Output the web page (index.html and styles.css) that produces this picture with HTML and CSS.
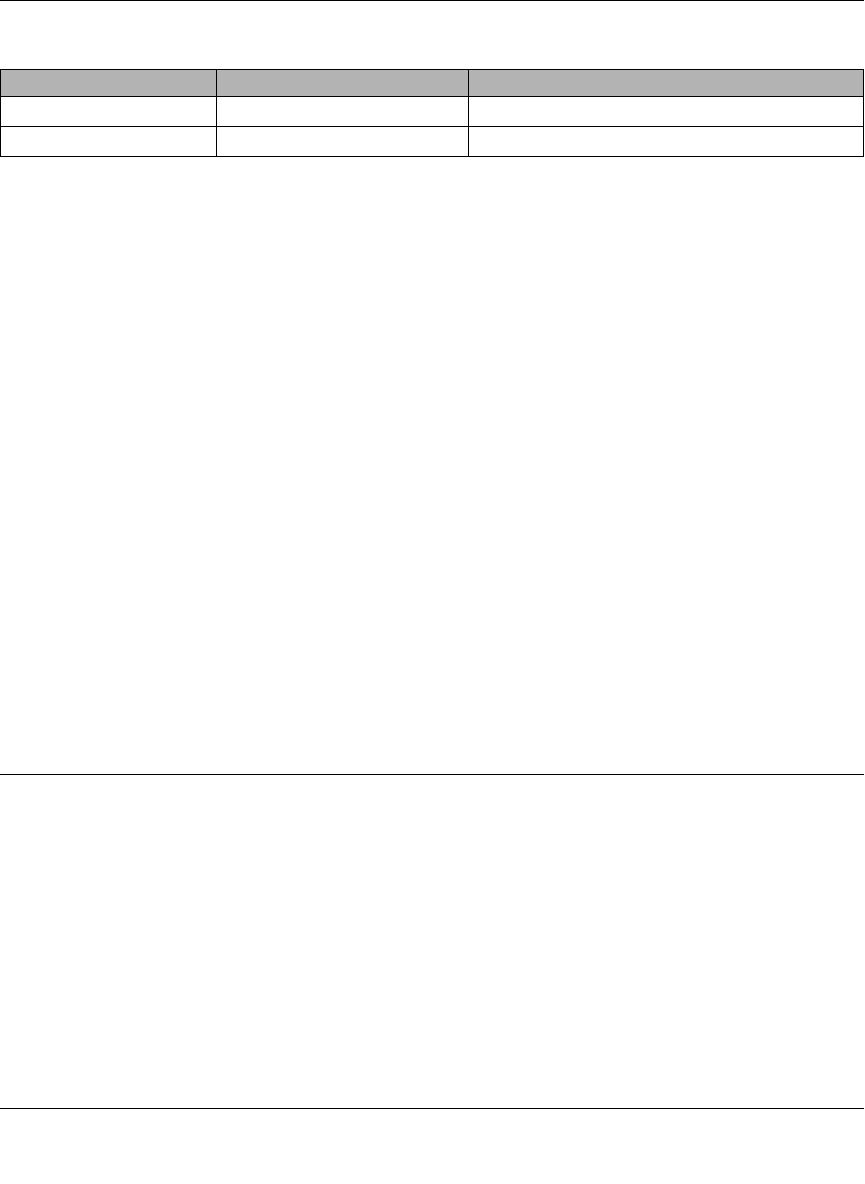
FILE: index.html
```html
<!DOCTYPE html>
<html>
<head>
    <title>Page</title>
    <meta charset="utf-8">
    <link rel="stylesheet" href="styles.css">
</head>
<body>
    <div class="page">
        <div class="rule"></div>
        <table class="grid">
            <colgroup>
                <col class="c1">
                <col class="c2">
                <col class="c3">
            </colgroup>
            <thead>
                <tr><th></th><th></th><th></th></tr>
            </thead>
            <tbody>
                <tr><td></td><td></td><td></td></tr>
                <tr><td></td><td></td><td></td></tr>
            </tbody>
        </table>
        <div class="rule mid"></div>
        <div class="rule low"></div>
    </div>
</body>
</html>
```

FILE: styles.css
```css
body { margin: 0; background: #fff; font-family: "Liberation Sans", Arial, sans-serif; }
.page { width: 864px; }
.rule { height: 0; border-top: 1px solid #000; }
.rule.mid { margin-top: 617px; }
.rule.low { margin-top: 333px; }
.grid { width: 864px; margin-top: 68px; table-layout: fixed; border-collapse: separate; border-spacing: 0; border-right: 1px solid #000; border-bottom: 1px solid #000; }
.c1 { width: 216px; }
.c2 { width: 252px; }
.grid th, .grid td { padding: 0; border-top: 1px solid #000; border-left: 1px solid #000; }
.grid th { height: 26px; background: #b3b3b3; }
.grid td { height: 29px; }
```
